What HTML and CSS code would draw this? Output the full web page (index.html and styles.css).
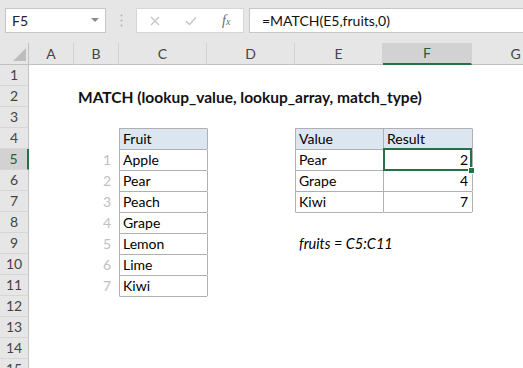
FILE: index.html
```html
<!DOCTYPE html>
<html lang="en">
<head>
    <meta charset="UTF-8">
    <title>MATCH example</title>
    <link rel="stylesheet" href="styles.css">
</head>
<body>

<!-- Name box + formula bar -->
<div class="toolbar">
    <div class="name-box">
        <span>F5</span>
        <svg width="8" height="5" viewBox="0 0 8 5"><path d="M0 0 L8 0 L4 4 Z" fill="#8a8a8a"/></svg>
    </div>
    <svg class="grip" width="3" height="13" viewBox="0 0 3 13">
        <circle cx="1.5" cy="1.5" r="1" fill="#b4b4b4"/>
        <circle cx="1.5" cy="6.5" r="1" fill="#b4b4b4"/>
        <circle cx="1.5" cy="11.5" r="1" fill="#b4b4b4"/>
    </svg>
    <div class="fx-buttons">
        <svg width="10" height="10" viewBox="0 0 10 10"><path d="M1 1 L9 9 M9 1 L1 9" stroke="#c4c4c4" stroke-width="1.3"/></svg>
        <svg width="12" height="10" viewBox="0 0 12 10"><path d="M1 5 L4.5 8.5 L11 1.5" stroke="#c4c4c4" stroke-width="1.3" fill="none"/></svg>
        <span class="fx">f<small>x</small></span>
    </div>
    <div class="formula">=MATCH(E5,fruits,0)</div>
</div>

<!-- Worksheet -->
<table class="sheet">
    <colgroup>
        <col class="w-rh"><col class="w-ab"><col class="w-ab">
        <col class="w-c"><col class="w-c"><col class="w-c"><col class="w-f"><col class="w-c">
    </colgroup>
    <tr>
        <th class="corner"><svg width="29" height="21" viewBox="0 0 29 21"><path d="M26 5 L26 18 L13 18 Z" fill="#bdbdbd"/></svg></th>
        <th class="ch">A</th><th class="ch">B</th><th class="ch">C</th><th class="ch">D</th>
        <th class="ch">E</th><th class="ch active">F</th><th class="ch">G</th>
    </tr>
    <tr><th class="rh">1</th><td></td><td></td><td></td><td></td><td></td><td></td><td></td></tr>
    <tr><th class="rh">2</th><td></td><td colspan="6" class="title">MATCH (lookup_value, lookup_array, match_type)</td></tr>
    <tr><th class="rh">3</th><td></td><td></td><td></td><td></td><td></td><td></td><td></td></tr>
    <tr>
        <th class="rh">4</th><td></td><td></td>
        <td class="box head">Fruit</td><td class="edge-left"></td>
        <td class="box head">Value</td><td class="box head">Result</td><td class="edge-left"></td>
    </tr>
    <tr>
        <th class="rh active">5</th><td></td><td class="idx">1</td>
        <td class="box">Apple</td><td class="edge-left"></td>
        <td class="box">Pear</td><td class="box num selected">2</td><td class="edge-left"></td>
    </tr>
    <tr>
        <th class="rh">6</th><td></td><td class="idx">2</td>
        <td class="box">Pear</td><td class="edge-left"></td>
        <td class="box">Grape</td><td class="box num">4</td><td class="edge-left"></td>
    </tr>
    <tr>
        <th class="rh">7</th><td></td><td class="idx">3</td>
        <td class="box">Peach</td><td class="edge-left"></td>
        <td class="box">Kiwi</td><td class="box num">7</td><td class="edge-left"></td>
    </tr>
    <tr>
        <th class="rh">8</th><td></td><td class="idx">4</td>
        <td class="box">Grape</td><td class="edge-left"></td>
        <td class="edge-top"></td><td class="edge-top"></td><td></td>
    </tr>
    <tr>
        <th class="rh">9</th><td></td><td class="idx">5</td>
        <td class="box">Lemon</td><td class="edge-left"></td>
        <td colspan="2" class="note">fruits = C5:C11</td><td></td>
    </tr>
    <tr>
        <th class="rh">10</th><td></td><td class="idx">6</td>
        <td class="box">Lime</td><td class="edge-left"></td><td></td><td></td><td></td>
    </tr>
    <tr>
        <th class="rh">11</th><td></td><td class="idx">7</td>
        <td class="box">Kiwi</td><td class="edge-left"></td><td></td><td></td><td></td>
    </tr>
    <tr><th class="rh">12</th><td></td><td></td><td class="edge-top"></td><td></td><td></td><td></td><td></td></tr>
    <tr><th class="rh">13</th><td></td><td></td><td></td><td></td><td></td><td></td><td></td></tr>
    <tr><th class="rh">14</th><td></td><td></td><td></td><td></td><td></td><td></td><td></td></tr>
    <tr><th class="rh">15</th><td></td><td></td><td></td><td></td><td></td><td></td><td></td></tr>
</table>

</body>
</html>
```

FILE: styles.css
```css
body {
    margin: 0;
    width: 523px;
    height: 368px;
    overflow: hidden;
    background-color: #fff;
    font-family: Lato, "Liberation Sans", sans-serif;
    font-size: 14px;
    color: #000;
}

/* formula bar */

.toolbar {
    height: 43px;
    box-sizing: border-box;
    padding: 8px 0 0 5px;
    display: flex;
    align-items: flex-start;
    background-color: #e6e6e6;
}

.name-box {
    width: 101px;
    height: 25px;
    box-sizing: border-box;
    border: 1px solid #c6c6c6;
    background-color: #fff;
    display: flex;
    align-items: center;
    justify-content: space-between;
    padding: 0 6px;
    color: #222;
}

.grip {
    margin: 6px 0 0 14px;
}

.fx-buttons {
    margin-left: 13px;
    width: 108px;
    height: 25px;
    box-sizing: border-box;
    border: 1px solid #d6d6d6;
    background-color: #fff;
    display: flex;
    align-items: center;
    justify-content: space-around;
}

.fx {
    font-family: "Liberation Serif", serif;
    font-style: italic;
    font-size: 14px;
    color: #6a6a6a;
}

.fx small {
    font-size: 10px;
}

.formula {
    margin-left: 5px;
    flex: 1;
    height: 25px;
    box-sizing: border-box;
    border: 1px solid #c6c6c6;
    border-right: none;
    background-color: #fff;
    padding-left: 12px;
    line-height: 23px;
    color: #111;
}

/* worksheet grid */

.sheet {
    border-collapse: separate;
    border-spacing: 0;
    table-layout: fixed;
    width: 560px;
}

.w-rh { width: 29px; }
.w-ab { width: 45px; }
.w-c { width: 88px; }
.w-f { width: 89px; }

.sheet tr {
    height: 21px;
}

.sheet td,
.sheet th {
    padding: 0 3px 1px;
    line-height: 18px;
    vertical-align: bottom;
    white-space: nowrap;
    overflow: visible;
    font-weight: normal;
    text-align: left;
    border-left: 1px solid transparent;
    border-top: 1px solid transparent;
}

.sheet th {
    background-color: #e6e6e6;
    color: #444;
    text-align: center;
    padding: 0 0 1px;
}

.sheet th.corner {
    border: none;
    border-right: 1px solid #c0c0c0;
    border-bottom: 1px solid #c0c0c0;
    padding: 0;
    line-height: 0;
    vertical-align: top;
}

.sheet th.ch {
    border-left: none;
    border-top: none;
    border-right: 1px solid #d2d2d2;
    border-bottom: 1px solid #c0c0c0;
}

.sheet th.rh {
    border-left: none;
    border-top: none;
    border-right: 1px solid #c0c0c0;
    border-bottom: 1px solid #d6d6d6;
}

.sheet th.ch.active {
    background-color: #d2d2d2;
    border-bottom: 2px solid #217346;
    color: #1f5f3c;
}

.sheet th.rh.active {
    background-color: #d2d2d2;
    border-right: 2px solid #217346;
    color: #1f5f3c;
}

/* cell contents */

.sheet td.title {
    font-weight: bold;
    font-size: 15.5px;
    color: #111;
}

.sheet td.note {
    font-style: italic;
    font-size: 14.5px;
}

.sheet td.idx {
    text-align: right;
    padding-right: 8px;
    color: #c0c0c0;
}

.sheet td.box {
    border-left-color: #b0b0b0;
    border-top-color: #b0b0b0;
}

.sheet td.edge-left {
    border-left-color: #b0b0b0;
}

.sheet td.edge-top {
    border-top-color: #b0b0b0;
}

.head {
    background-color: #dce6f1;
}

.sheet td.num {
    text-align: right;
    padding-right: 4px;
}

/* active cell outline with fill handle */

.selected {
    position: relative;
}

.selected::after {
    content: "";
    position: absolute;
    top: -2px;
    left: -1px;
    right: 0;
    bottom: -1px;
    border: 2px solid #217346;
}

.selected::before {
    content: "";
    position: absolute;
    right: -3px;
    bottom: -4px;
    width: 5px;
    height: 5px;
    background-color: #217346;
    border: 1px solid #fff;
    z-index: 1;
}
```
